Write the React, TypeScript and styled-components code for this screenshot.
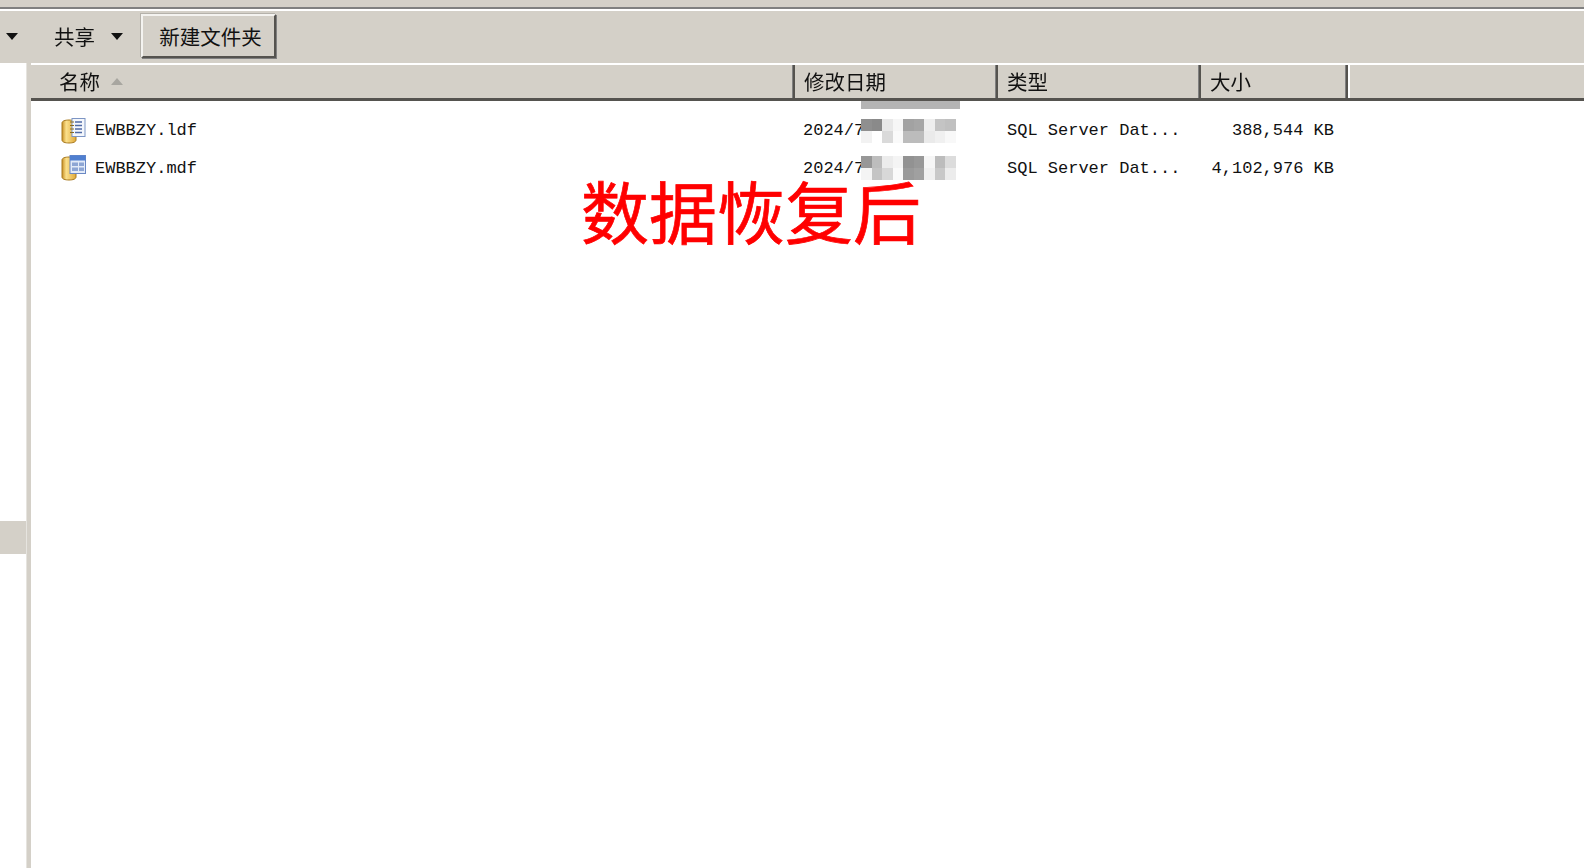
import * as React from "react";
import styled, { createGlobalStyle } from "styled-components";

const COLORS = {
  face: "#d4d0c8",
  shadow: "#808080",
  dark: "#404040",
  text: "#111111",
  light: "#ffffff",
};

const CJK = `"Noto Sans CJK SC", "Noto Sans", sans-serif`;
const MONO = `"Liberation Mono", "Noto Sans CJK SC", monospace`;

const GlobalStyle = createGlobalStyle`
  html, body {
    margin: 0;
    padding: 0;
    height: 100%;
    overflow: hidden;
    background: ${COLORS.light};
  }
  #root {
    height: 100%;
  }
`;

const Page = styled.div`
  position: relative;
  width: 1584px;
  height: 868px;
  display: flex;
  flex-direction: column;
  overflow: hidden;
`;

const TitleEdge = styled.div`
  height: 7px;
  background: ${COLORS.face};
  border-bottom: 2px solid ${COLORS.shadow};
`;

const Toolbar = styled.div`
  height: 54px;
  padding-bottom: 2px;
  box-sizing: border-box;
  border-top: 2px solid ${COLORS.light};
  background: ${COLORS.face};
  display: flex;
  align-items: center;
  font: 20.5px/1 ${CJK};
  color: ${COLORS.text};
`;

const ToolbarLabel = styled.span`
  filter: blur(0.3px);
`;

const Arrow = styled.span<{ $left: number; $right: number }>`
  width: 0;
  height: 0;
  margin-left: ${(p) => p.$left}px;
  margin-right: ${(p) => p.$right}px;
  border-left: 6px solid transparent;
  border-right: 6px solid transparent;
  border-top: 7px solid #111;
`;

const ToolbarButton = styled.button`
  width: 135px;
  height: 44px;
  margin-left: 18px;
  padding: 0 0 0 4px;
  box-sizing: border-box;
  background: ${COLORS.face};
  border: 2px solid;
  border-color: #f4f3f0 #55534f #55534f #f4f3f0;
  box-shadow: 1px 1px 0 ${COLORS.shadow}, -1px -1px 0 #b5b2ab;
  font: 20.5px/1 ${CJK};
  color: ${COLORS.text};
`;

const Body = styled.div`
  flex: 1;
  display: flex;
  min-height: 0;
`;

const NavPane = styled.div`
  width: 26px;
  padding-top: 458px;
  background: ${COLORS.light};
`;

const NavSelection = styled.div`
  height: 33px;
  background: ${COLORS.face};
`;

const Splitter = styled.div`
  width: 5px;
  background: ${COLORS.face};
  border-left: 1px solid #e6e4df;
  box-sizing: border-box;
`;

const ListPane = styled.div`
  flex: 1;
  display: flex;
  flex-direction: column;
`;

const HeaderRow = styled.div`
  height: 38px;
  box-sizing: border-box;
  display: flex;
  background: ${COLORS.face};
  border-top: 2px solid ${COLORS.light};
  border-bottom: 3px solid #55534f;
`;

const HeaderCell = styled.div<{ $width: number; $pad: number }>`
  width: ${(p) => p.$width}px;
  box-sizing: border-box;
  padding-left: ${(p) => p.$pad}px;
  display: flex;
  align-items: center;
  gap: 11px;
  font: 20.5px/1 ${CJK};
  color: ${COLORS.text};
  border-right: 2px solid #55534f;
  box-shadow: inset -1px 0 0 ${COLORS.shadow};
`;

const HeaderText = styled.span`
  filter: blur(0.3px);
`;

const SortMark = styled.span`
  width: 0;
  height: 0;
  border-left: 6px solid transparent;
  border-right: 6px solid transparent;
  border-bottom: 7px solid #a8a6a0;
`;

const HeaderFiller = styled.div`
  flex: 1;
  border-left: 2px solid ${COLORS.light};
`;

const FileList = styled.div`
  padding-top: 11px;
  font: 17px/1 ${MONO};
  color: ${COLORS.text};
`;

const FileRow = styled.div`
  height: 37.5px;
  display: flex;
  align-items: center;
`;

const NameCell = styled.div`
  width: 764px;
  padding-left: 30px;
  box-sizing: border-box;
  display: flex;
  align-items: center;
  gap: 9px;
`;

const DateCell = styled.div`
  width: 203px;
  padding-left: 8px;
  box-sizing: border-box;
  display: flex;
  align-items: center;
`;

const TypeCell = styled.div`
  width: 202px;
  padding-left: 9px;
  box-sizing: border-box;
`;

const SizeCell = styled.div`
  width: 134px;
  text-align: right;
`;

const Mosaic = styled.div`
  display: grid;
  grid-template-columns: repeat(9, 10.5px);
  grid-auto-rows: 12px;
  margin-left: -3px;
  filter: blur(0.5px);
`;

const MosaicBar = styled.div`
  position: absolute;
  left: 861px;
  top: 101px;
  width: 99px;
  height: 8px;
  background: #b4b4b4;
`;

const Stamp = styled.div`
  position: absolute;
  left: 581px;
  top: 176px;
  font: 400 68px/1 ${CJK};
  -webkit-text-stroke: 0.7px #ff0000;
  color: #ff0000;
  white-space: nowrap;
`;

const DbIcon = ({ kind }: { kind: "log" | "data" }) => (
  <svg width="25" height="26" viewBox="0 0 25 26">
    <defs>
      <linearGradient id={`gold-${kind}`} x1="0" x2="1" y1="0" y2="0">
        <stop offset="0" stopColor="#c88f22" />
        <stop offset="0.3" stopColor="#fbe08c" />
        <stop offset="1" stopColor="#e0a93a" />
      </linearGradient>
    </defs>
    <path
      d="M1 5c0-2 3-3 7-3s7 1 7 3v17c0 2-3 3-7 3s-7-1-7-3z"
      fill={`url(#gold-${kind})`}
      stroke="#a87a20"
      strokeWidth="1"
    />
    {kind === "log" ? (
      <g>
        <rect x="11" y="0.5" width="13" height="18" fill="#f4f7fc" stroke="#7d95c4" />
        <path d="M14 4h7M14 7.5h7M14 11h7M14 14.5h7" stroke="#4f6aa5" strokeWidth="1.3" />
        <path d="M9 4h4M9 7.5h4M9 11h4M9 14.5h4" stroke="#8a6a20" strokeWidth="1" />
      </g>
    ) : (
      <g>
        <rect x="9" y="0.5" width="15.5" height="18" fill="#e3ebf8" stroke="#6a88c4" />
        <rect x="9" y="0.5" width="15.5" height="5" fill="#4f7fd0" />
        <path d="M11 7.5h6v3.5h-6zM18 7.5h5v3.5h-5zM11 12.5h6v3.5h-6zM18 12.5h5v3.5h-5z" fill="#8ea6d4" />
      </g>
    )}
  </svg>
);

const MOSAICS = [
  ["#8f8f8f", "#8a8a8a", "#e8e8e8", "#f6f6f6", "#a2a2a2", "#a6a6a6", "#eeeeee", "#c4c4c4", "#c0c0c0",
   "#f2f2f2", "#ffffff", "#dadada", "#fafafa", "#bcbcbc", "#bcbcbc", "#eaeaea", "#f0f0f0", "#f8f8f8"],
  ["#979797", "#bdbdbd", "#ececec", "#f4f4f4", "#929292", "#989898", "#f6f6f6", "#bcbcbc", "#dcdcdc",
   "#f4f4f4", "#c4c4c4", "#d8d8d8", "#fafafa", "#9a9a9a", "#a0a0a0", "#f0f0f0", "#c8c8c8", "#ececec"],
];

const FILES = [
  { name: "EWBBZY.ldf", kind: "log" as const, size: "388,544 KB" },
  { name: "EWBBZY.mdf", kind: "data" as const, size: "4,102,976 KB" },
];

export default function App() {
  return (
    <Page>
      <GlobalStyle />
      <TitleEdge />
      <Toolbar>
        <Arrow $left={6} $right={36} />
        <ToolbarLabel>共享</ToolbarLabel>
        <Arrow $left={16} $right={0} />
        <ToolbarButton>新建文件夹</ToolbarButton>
      </Toolbar>
      <Body>
        <NavPane>
          <NavSelection />
        </NavPane>
        <Splitter />
        <ListPane>
          <HeaderRow>
            <HeaderCell $width={764} $pad={28}>
              <HeaderText>名称</HeaderText>
              <SortMark />
            </HeaderCell>
            <HeaderCell $width={203} $pad={9}>
              <HeaderText>修改日期</HeaderText>
            </HeaderCell>
            <HeaderCell $width={203} $pad={9}>
              <HeaderText>类型</HeaderText>
            </HeaderCell>
            <HeaderCell $width={147} $pad={9}>
              <HeaderText>大小</HeaderText>
            </HeaderCell>
            <HeaderFiller />
          </HeaderRow>
          <FileList>
            {FILES.map((file, i) => (
              <FileRow key={file.name}>
                <NameCell>
                  <DbIcon kind={file.kind} />
                  {file.name}
                </NameCell>
                <DateCell>
                  2024/7
                  <Mosaic>
                    {MOSAICS[i].map((color, j) => (
                      <div key={j} style={{ background: color }} />
                    ))}
                  </Mosaic>
                </DateCell>
                <TypeCell>SQL Server Dat...</TypeCell>
                <SizeCell>{file.size}</SizeCell>
              </FileRow>
            ))}
          </FileList>
        </ListPane>
      </Body>
      <MosaicBar />
      <Stamp>数据恢复后</Stamp>
    </Page>
  );
}
